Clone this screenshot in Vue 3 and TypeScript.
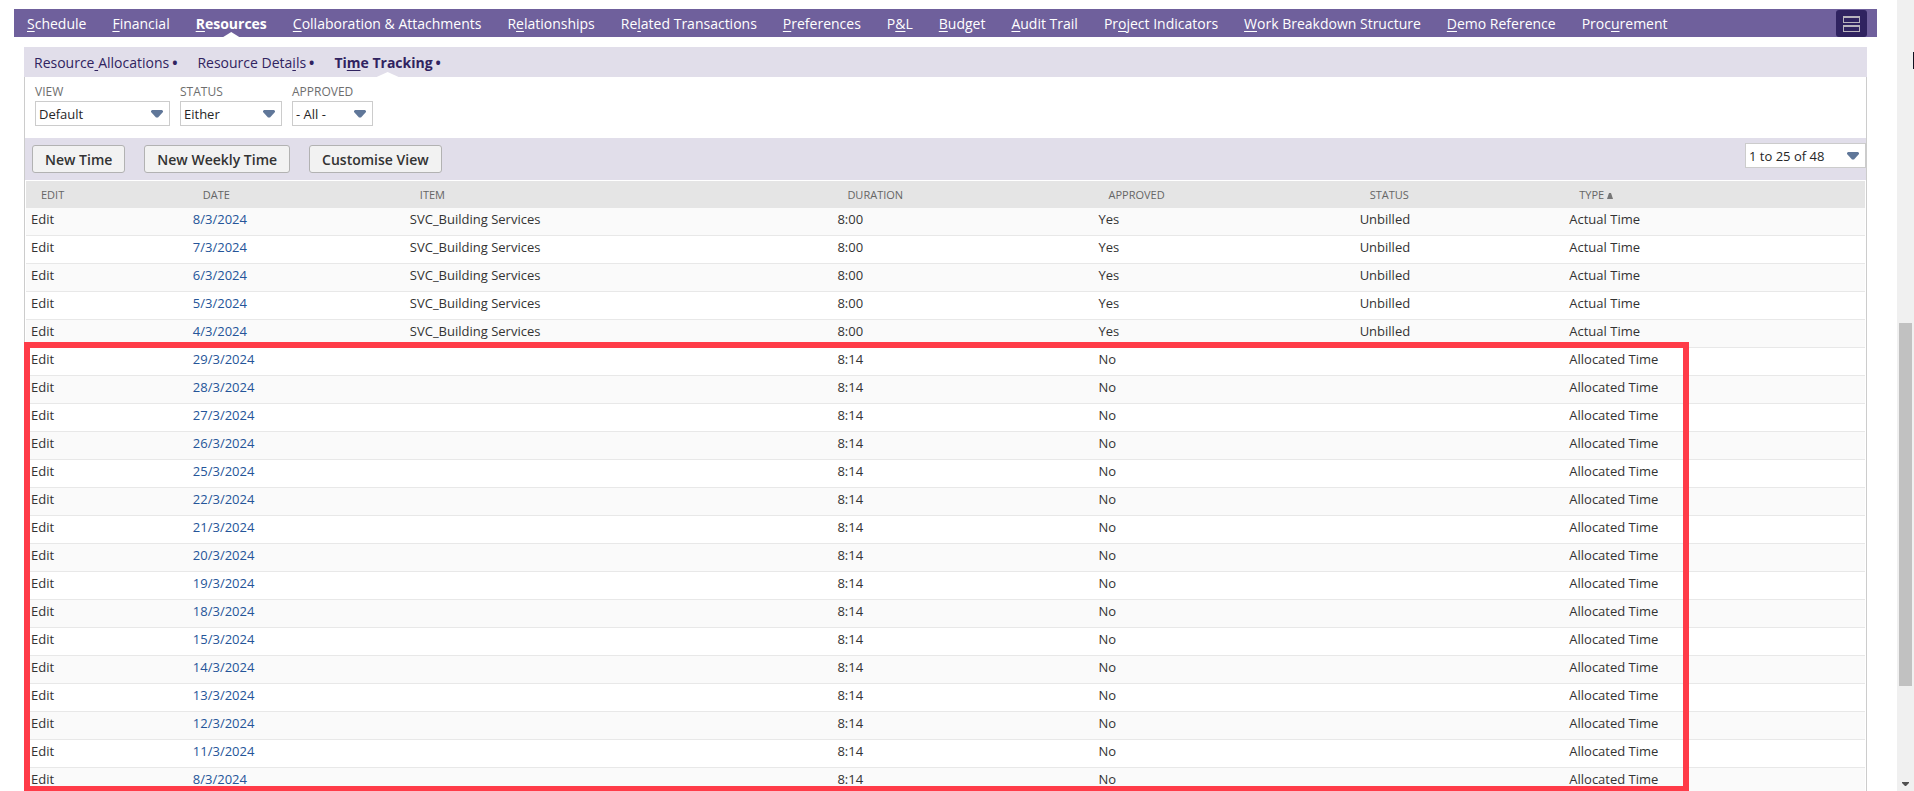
<script setup lang="ts">
import { ref } from 'vue'

interface Tab {
  before: string
  key: string
  after: string
}

interface TimeRow {
  date: string
  item: string
  duration: string
  approved: string
  status: string
  type: string
}

const tabs: Tab[] = [
  { before: '', key: 'S', after: 'chedule' },
  { before: '', key: 'F', after: 'inancial' },
  { before: '', key: 'R', after: 'esources' },
  { before: '', key: 'C', after: 'ollaboration & Attachments' },
  { before: 'R', key: 'e', after: 'lationships' },
  { before: 'Re', key: 'l', after: 'ated Transactions' },
  { before: '', key: 'P', after: 'references' },
  { before: 'P', key: '&', after: 'L' },
  { before: '', key: 'B', after: 'udget' },
  { before: '', key: 'A', after: 'udit Trail' },
  { before: 'Pr', key: 'o', after: 'ject Indicators' },
  { before: '', key: 'W', after: 'ork Breakdown Structure' },
  { before: '', key: 'D', after: 'emo Reference' },
  { before: 'Proc', key: 'u', after: 'rement' },
]

const subTabs: Tab[] = [
  { before: 'Resource', key: ' ', after: 'Allocations' },
  { before: 'Resource Deta', key: 'i', after: 'ls' },
  { before: 'Ti', key: 'm', after: 'e Tracking' },
]

const activeTab = ref(2)
const activeSubTab = ref(2)

const filters = [
  { id: 'view', label: 'VIEW', value: 'Default' },
  { id: 'status', label: 'STATUS', value: 'Either' },
  { id: 'approved', label: 'APPROVED', value: '- All -' },
]

const actions = ['New Time', 'New Weekly Time', 'Customise View']
const columns = ['EDIT', 'DATE', 'ITEM', 'DURATION', 'APPROVED', 'STATUS', 'TYPE']

const actualDays = [8, 7, 6, 5, 4]
const allocatedDays = [29, 28, 27, 26, 25, 22, 21, 20, 19, 18, 15, 14, 13, 12, 11, 8]

const rows: TimeRow[] = [
  ...actualDays.map((day) => ({
    date: `${day}/3/2024`,
    item: 'SVC_Building Services',
    duration: '8:00',
    approved: 'Yes',
    status: 'Unbilled',
    type: 'Actual Time',
  })),
  ...allocatedDays.map((day) => ({
    date: `${day}/3/2024`,
    item: '',
    duration: '8:14',
    approved: 'No',
    status: '',
    type: 'Allocated Time',
  })),
]
</script>

<template>
  <div class="page">
    <main class="content">
      <nav class="tabs">
        <a
          v-for="(tab, i) in tabs"
          :key="i"
          href="#"
          class="tab"
          :class="{ active: i === activeTab }"
          @click.prevent="activeTab = i"
        >{{ tab.before }}<u>{{ tab.key }}</u>{{ tab.after }}</a>
        <button type="button" class="layout-toggle" aria-label="Toggle layout">
          <svg width="17" height="16" viewBox="0 0 17 16">
            <path d="M0 0h17v7H0zM1 2v4h15V2zM0 9h17v7H0zM1 11v4h15v-4z" fill="#b9b4bd" fill-rule="evenodd" />
          </svg>
        </button>
      </nav>

      <section class="panel">
        <nav class="subtabs">
          <a
            v-for="(tab, i) in subTabs"
            :key="i"
            href="#"
            class="subtab"
            :class="{ active: i === activeSubTab }"
            @click.prevent="activeSubTab = i"
          ><span class="name">{{ tab.before }}<u>{{ tab.key }}</u>{{ tab.after }}</span><span class="dot">•</span></a>
        </nav>

        <div class="body">
          <form class="filters">
            <div v-for="f in filters" :key="f.id" class="field">
              <label :for="f.id">{{ f.label }}</label>
              <div class="dropdown" :class="f.id">
                <select :id="f.id"><option>{{ f.value }}</option></select>
                <svg class="arrow" width="12" height="8" viewBox="0 0 12 8"><path d="M1 0h10l1 1v1L7 7.5H5L0 2V1z" fill="#607799" /></svg>
              </div>
            </div>
          </form>

          <div class="toolbar">
            <button v-for="a in actions" :key="a" type="button" class="action">{{ a }}</button>
            <div class="dropdown pager">
              <select aria-label="Range"><option>1 to 25 of 48</option></select>
              <svg class="arrow" width="12" height="8" viewBox="0 0 12 8"><path d="M1 0h10l1 1v1L7 7.5H5L0 2V1z" fill="#607799" /></svg>
            </div>
          </div>

          <table class="grid">
            <colgroup>
              <col v-for="c in columns" :key="c" :class="'col-' + c.toLowerCase()" />
            </colgroup>
            <thead>
              <tr>
                <th v-for="c in columns" :key="c" scope="col">{{ c }}<svg v-if="c === 'TYPE'" class="sort" width="6" height="6" viewBox="0 0 6 6"><path d="M2 0h2l2 6H0z" fill="#777" /></svg></th>
              </tr>
            </thead>
            <tbody>
              <tr v-for="(r, i) in rows" :key="i">
                <td><a href="#" class="edit">Edit</a></td>
                <td><a href="#" class="date">{{ r.date }}</a></td>
                <td>{{ r.item }}</td>
                <td>{{ r.duration }}</td>
                <td>{{ r.approved }}</td>
                <td>{{ r.status }}</td>
                <td>{{ r.type }}</td>
              </tr>
            </tbody>
          </table>
        </div>
        <div class="highlight"></div>
      </section>
    </main>

    <div class="scrollbar">
      <div class="before"></div>
      <div class="thumb"></div>
      <div class="after"></div>
      <svg class="down" width="7" height="4" viewBox="0 0 7 4"><path d="M0 0h7v1L4 4H3L0 1z" fill="#505050" /></svg>
      <div class="edge-mark"></div>
    </div>
  </div>
</template>

<style>
body {
  margin: 0;
  background: #fff;
}
</style>

<style scoped>
* {
  box-sizing: border-box;
}

.page {
  display: flex;
  height: 100vh;
  overflow: hidden;
  color: #333;
  font-family: "Open Sans", "Noto Sans", sans-serif;
  font-size: 13px;
}

.content {
  display: flex;
  flex: 1;
  flex-direction: column;
  gap: 10px;
  min-width: 0;
  padding: 9px 20px 0 14px;
}

a {
  text-decoration: none;
}

u {
  text-decoration: underline;
  text-underline-offset: 2px;
}

.tabs {
  display: flex;
  flex: none;
  gap: 26px;
  height: 28px;
  padding: 0 10px 0 13px;
  background: #6f609c;
}

.tab {
  position: relative;
  color: #fff;
  font-size: 14px;
  line-height: 29px;
  white-space: nowrap;
}

.tab.active,
.subtab.active .name {
  font-weight: 700;
}

.tab.active::after,
.subtab.active::after {
  position: absolute;
  bottom: 0;
  left: 50%;
  width: 16px;
  height: 5px;
  margin-left: -8px;
  background: #fff;
  clip-path: polygon(50% 0, 100% 100%, 0 100%);
  content: "";
}

.layout-toggle {
  display: flex;
  align-items: center;
  justify-content: center;
  width: 31px;
  height: 27px;
  margin: 1px 0 0 auto;
  padding: 0;
  border: 0;
  border-radius: 3px;
  background: #302360;
}

.panel {
  position: relative;
  display: flex;
  flex: 1;
  flex-direction: column;
  min-height: 0;
  margin: 0 10px;
}

.subtabs {
  display: flex;
  flex: none;
  gap: 20px;
  height: 30px;
  padding-left: 10px;
  background: #e1deea;
}

.subtab {
  position: relative;
  display: flex;
  gap: 3px;
  color: #302360;
  font-size: 14px;
  line-height: 31px;
  white-space: nowrap;
}

.subtab.active::after {
  width: 22px;
  margin-left: -11px;
}

.dot {
  font-weight: 700;
}

.body {
  flex: 1;
  min-height: 0;
  overflow: hidden;
  border: solid #ccc;
  border-width: 0 1px;
}

.filters {
  display: flex;
  gap: 10px;
  height: 61px;
  padding: 5px 10px 0;
}

.field label {
  display: block;
  height: 19px;
  color: #6e6e6e;
  font-size: 12px;
  line-height: 19px;
}

.dropdown {
  position: relative;
  height: 25px;
}

.dropdown.view {
  width: 135px;
}

.dropdown.status {
  width: 102px;
}

.dropdown.approved {
  width: 81px;
}

.dropdown select {
  width: 100%;
  height: 100%;
  padding: 0 3px;
  appearance: none;
  border: 1px solid #ccc;
  border-radius: 0;
  background: #fff;
  color: #262626;
  font: inherit;
}

.arrow {
  position: absolute;
  top: 9px;
  right: 7px;
  pointer-events: none;
}

.toolbar {
  display: flex;
  gap: 19px;
  height: 42px;
  padding: 7px 0 0 7px;
  background: #e1deea;
}

.action {
  height: 28px;
  padding: 0 12px;
  border: 1px solid #b2b2b2;
  border-radius: 3px;
  background: #f2f2f2;
  color: #333;
  font-family: inherit;
  font-size: 14px;
  font-weight: 600;
  white-space: nowrap;
}

.pager {
  width: 121px;
  margin: -2px 0 0 auto;
}

.grid {
  width: calc(100% - 2px);
  margin: 1px 1px 0;
  border-collapse: separate;
  border-spacing: 0;
  table-layout: fixed;
}

.col-edit {
  width: 8.8%;
}

.col-date {
  width: 11.8%;
}

.col-item {
  width: 23.25%;
}

.col-duration,
.col-approved {
  width: 14.2%;
}

.col-status {
  width: 11.4%;
}

th {
  height: 27px;
  padding: 0 5px 0 15px;
  background: #e5e5e5;
  color: #666;
  font-size: 11px;
  font-weight: 400;
  text-align: left;
}

.sort {
  margin-left: 3px;
}

td {
  height: 28px;
  padding: 1px 5px 6px;
  border-bottom: 1px solid #e8e8e8;
  line-height: 20px;
  white-space: nowrap;
}

tbody tr:nth-child(odd) {
  background: #fafafa;
}

.edit {
  color: #333;
}

.date {
  color: #255599;
}

.highlight {
  position: absolute;
  top: 295px;
  bottom: 0;
  left: 0;
  width: 90.35%;
  border: 6px solid #ff3b48;
  border-bottom-width: 5px;
  pointer-events: none;
}

.scrollbar {
  position: relative;
  display: flex;
  flex: none;
  flex-direction: column;
  width: 17px;
  padding: 0 2px;
  background: #f0f0f0;
}

.before {
  flex: 323;
}

.thumb {
  flex: 363;
  background: #c1c1c1;
}

.after {
  flex: 105;
}

.down {
  position: absolute;
  bottom: 5px;
  left: 5px;
}

.edge-mark {
  position: absolute;
  top: 52px;
  right: 0;
  width: 1px;
  height: 17px;
  background: #101020;
}
</style>
